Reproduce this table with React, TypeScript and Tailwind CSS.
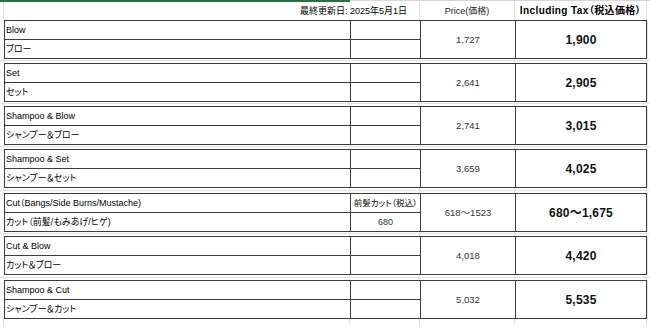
import React from 'react';

type Item = {
  en: string;
  ja: string;
  price: string;
  tax: string;
  note?: [string, string];
};

const ITEMS: Item[] = [
  { en: 'Blow', ja: 'ブロー', price: '1,727', tax: '1,900' },
  { en: 'Set', ja: 'セット', price: '2,641', tax: '2,905' },
  { en: 'Shampoo & Blow', ja: 'シャンプー＆ブロー', price: '2,741', tax: '3,015' },
  { en: 'Shampoo & Set', ja: 'シャンプー＆セット', price: '3,659', tax: '4,025' },
  {
    en: 'Cut（Bangs/Side Burns/Mustache)',
    ja: 'カット（前髪/もみあげ/ヒゲ)',
    price: '618～1523',
    tax: '680～1,675',
    note: ['前髪カット（税込）', '680'],
  },
  { en: 'Cut & Blow', ja: 'カット＆ブロー', price: '4,018', tax: '4,420' },
  { en: 'Shampoo & Cut', ja: 'シャンプー＆カット', price: '5,032', tax: '5,535' },
];

// gap rows between the boxed groups
const GAPS = [5, 5, 5, 6, 5, 6];

function GridCells({ h, line }: { h: number; line?: boolean }) {
  const b = line ? 'border-b border-b-[#e3e3e3]' : '';
  return (
    <div className="flex" style={{ height: h }}>
      <div className={`w-[4px] border-r border-[#e3e3e3] ${b}`} />
      <div className={`w-[346px] border-r border-[#e3e3e3] ${b}`} />
      <div className={`w-[70px] border-r border-[#e3e3e3] ${b}`} />
      <div className={`w-[95px] border-r border-[#e3e3e3] ${b}`} />
      <div className={`w-[132px] border-r border-[#e3e3e3] ${b}`} />
      <div className={`flex-1 ${b}`} />
    </div>
  );
}

function Spacer({ h }: { h: number }) {
  const top = Math.floor(h / 2);
  return (
    <div className="flex flex-col">
      <GridCells h={top} line />
      <GridCells h={h - top - 1} />
    </div>
  );
}

function Group({ item }: { item: Item }) {
  return (
    <div className="flex">
      <div className="w-[4px]" />
      <div className="grid w-[643px] grid-cols-[345px_69px_94px_130px] grid-rows-[18px_18px] gap-px bg-[#3c3c3c] p-px">
        <div className="flex items-center bg-white pl-[1px] text-[9px] text-black">{item.en}</div>
        <div className="flex items-center justify-center bg-white text-[8.5px] text-black">
          {item.note?.[0]}
        </div>
        <div className="row-span-2 flex items-center justify-center bg-white text-[9.5px] text-[#333]">
          {item.price}
        </div>
        <div className="row-span-2 flex items-center justify-center bg-white pt-[1px] text-[12px] font-bold tracking-[0.2px] text-[#111]">
          {item.tax}
        </div>
        <div className="flex items-center bg-white pl-[1px] text-[9px] text-black">{item.ja}</div>
        <div className="flex items-center justify-center bg-white text-[9px] text-[#333]">
          {item.note?.[1]}
        </div>
      </div>
      <div className="flex-1 border-l border-[#e3e3e3]" />
    </div>
  );
}

export default function App() {
  return (
    <div className="h-[329px] w-[650px] overflow-hidden bg-white font-['Liberation_Sans','Noto_Sans_CJK_JP',sans-serif] leading-none [font-feature-settings:'palt']">
      <div className="flex h-[2px]">
        <div className="w-[350px] bg-[#217346]" />
        <div className="flex-1 border-t border-[#d6d6d6]" />
      </div>

      <header className="flex h-[18px] items-center text-[9px] text-black">
        <div className="h-full w-[4px] border-r border-[#e3e3e3]" />
        <div className="flex h-full w-[416px] items-center justify-end border-r border-[#e3e3e3] pr-[12px]">
          最終更新日: 2025年5月1日
        </div>
        <div className="flex h-full w-[95px] items-center justify-center border-r border-[#e3e3e3] text-[#222]">
          Price(価格)
        </div>
        <div className="flex h-full w-[132px] items-center justify-center border-r border-[#e3e3e3] text-[10px] font-bold tracking-[0.4px]">
          Including Tax（税込価格）
        </div>
        <div className="h-full flex-1" />
      </header>

      {ITEMS.map((item, i) => (
        <React.Fragment key={item.en}>
          <Group item={item} />
          {i < GAPS.length && <Spacer h={GAPS[i]} />}
        </React.Fragment>
      ))}

      <GridCells h={6} />
    </div>
  );
}
